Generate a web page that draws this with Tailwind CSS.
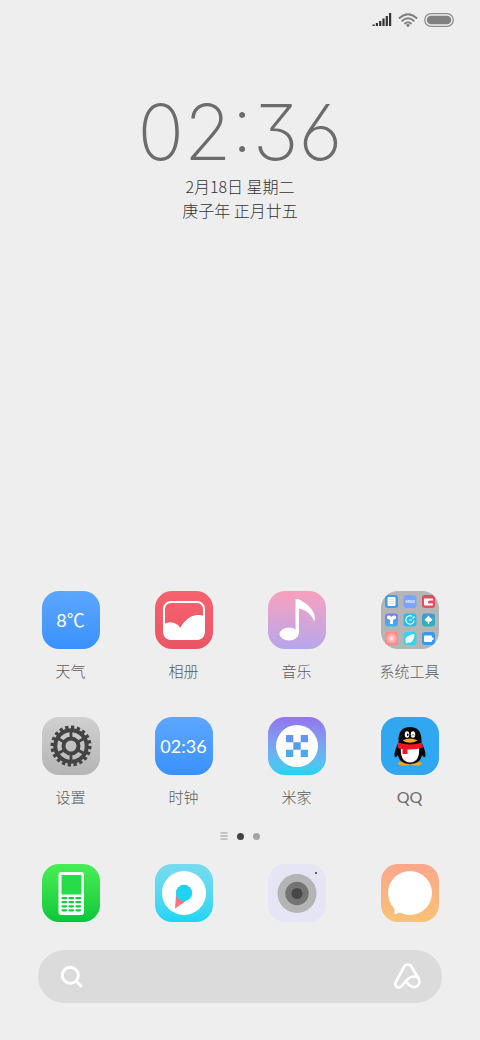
<!DOCTYPE html>
<html lang="zh-CN">
<head>
<meta charset="utf-8">
<meta name="viewport" content="width=device-width, initial-scale=1">
<title>主屏幕</title>
<script src="https://cdn.jsdelivr.net/npm/@tailwindcss/browser@4"></script>
</head>
<body class="flex min-h-screen flex-col bg-[#eeeeee] font-['Noto_Sans_CJK_SC',sans-serif] font-light text-[#5c5c5c]">
<header class="flex h-10 items-center justify-end gap-[6px] pr-[26px]">
  <svg class="h-[14px] w-[20px]" viewBox="0 0 20 14" fill="#333" role="img" aria-label="信号"><path d="M.5 11.500h2.200V13H.5zM3.800 10H6v3H3.800zM7.100 8h2.200v5H7.100zM10.400 5.500h2.200V13h-2.200zM13.700 3h2.200v10h-2.200zM17 0h2.200v13H17z"/></svg>
  <svg class="h-[14px] w-[20px]" viewBox="0 0 20 14" fill="none" stroke="#808080" stroke-width="1.900" stroke-linecap="round" role="img" aria-label="无线网络"><path d="M1.500 5Q10-2.600 18.500 5M4.300 7.800Q10 2.700 15.700 7.800M7 10.400Q10 7.900 13 10.400"/><circle cx="10" cy="12.300" r=".7" fill="#808080"/></svg>
  <svg class="h-[14px] w-[30px]" viewBox="0 0 30 14" role="img" aria-label="电池"><rect x=".7" y=".7" width="28.600" height="12.600" rx="6.300" fill="none" stroke="#8a8a8a" stroke-width="1.200"/><rect x="2.800" y="2.800" width="24.400" height="8.400" rx="4.200" fill="#808080"/></svg>
</header>

<section class="mt-12 flex flex-col items-center">
  <time class="font-['Inter',sans-serif] text-[77px] leading-[88px] font-extralight text-[#6c6c6c] [font-feature-settings:'cv09','cv03']">02:36</time>
  <p class="text-base leading-5 text-[#333]">2月18日 星期二</p>
  <p class="mt-1 text-base leading-5 text-[#333]">庚子年 正月廿五</p>
</section>

<main class="mt-auto pb-[37px]">
  <nav aria-label="应用" class="grid grid-cols-4 gap-y-[35px] px-[14px]">
    <a href="#weather" class="flex flex-col items-center gap-[10px]">
      <span class="grid size-[58px] place-items-center rounded-[17px] bg-linear-to-b from-[#5da6ff] to-[#3991ff] font-['Lato','Noto_Sans_CJK_SC',sans-serif] text-lg leading-none font-normal text-white">8℃</span>
      <span class="text-[15px] leading-[23px]">天气</span>
    </a>
    <a href="#gallery" class="flex flex-col items-center gap-[10px]">
      <svg class="size-[58px] rounded-[17px] bg-linear-to-b from-[#f8626e] to-[#e85665]" viewBox="0 0 58 58"><rect x="9" y="11" width="40" height="37" rx="7" fill="none" stroke="#fff" stroke-width="2"/><path d="M9 33q5-3 10-1 5 2 6 5 6-11 16-13 4-.5 8 1v17q0 6-6 6H15q-6 0-6-6z" fill="#fff"/></svg>
      <span class="text-[15px] leading-[23px]">相册</span>
    </a>
    <a href="#music" class="flex flex-col items-center gap-[10px]">
      <svg class="size-[58px] rounded-[17px] bg-linear-to-b from-[#f8a0bd] to-[#b5a6ec]" viewBox="0 0 58 58" fill="#fff"><ellipse cx="21" cy="43" rx="9.500" ry="6.500"/><path d="M27.500 8h3c3 2 8 4 12 9 4 5 5 9 4 13.500C43 23 38 19 31 17.500V43h-3.500z"/></svg>
      <span class="text-[15px] leading-[23px]">音乐</span>
    </a>
    <a href="#tools" class="flex flex-col items-center gap-[10px]">
      <svg class="size-[58px] rounded-[17px] bg-[#b5b5b5]" viewBox="0 0 58 58">
        <defs>
          <linearGradient id="g1" x2="0" y2="1"><stop stop-color="#8177e8"/><stop offset="1" stop-color="#2dbcf5"/></linearGradient>
          <linearGradient id="g2" x2="0" y2="1"><stop stop-color="#3f98d8"/><stop offset="1" stop-color="#28b7b0"/></linearGradient>
          <radialGradient id="g3"><stop stop-color="#ffe7e5"/><stop offset=".4" stop-color="#ffb9b7"/><stop offset="1" stop-color="#ff8585"/></radialGradient>
        </defs>
        <rect x="4" y="4" width="13" height="13" rx="3" fill="#4399f2"/><rect x="6.500" y="6" width="8" height="9" rx="1" fill="#fff"/><path d="M8 8.500h5M8 10.500h5M8 12.500h5" stroke="#c5d8e8" stroke-width=".6"/>
        <rect x="22.500" y="4" width="13" height="13" rx="3" fill="#7ba5fa"/><text x="29" y="12" text-anchor="middle" font-family="Lato" font-size="4" font-weight="900" fill="#eef4ff">MIUI</text>
        <rect x="41" y="4" width="13" height="13" rx="3" fill="#e64b60"/><path d="M43 7.500h8q1 0 1 1v1h-3.500q-1.500 0-1.500 1.500t1.500 1.500H52v1q0 1-1 1h-7q-1 0-1-1z" fill="#fff"/>
        <rect x="4" y="22.500" width="13" height="13" rx="3" fill="url(#g1)"/><path d="M6 25.500q2-2 4.500.5 2.500-2.500 4.500-.5v2l-3 1.500v4H9v-4l-3-1.500z" fill="#fff"/>
        <rect x="22.500" y="22.500" width="13" height="13" rx="3" fill="#25bdeb"/><path d="M31 25.200a4.200 4.200 0 1 0 2.200 4.300M28 29h3M31.500 27.500l2-2" stroke="#fff" stroke-width="1.200" fill="none"/>
        <rect x="41" y="22.500" width="13" height="13" rx="3" fill="url(#g2)"/><path d="m47.500 24.500 1.500 2 2.500 2-2 2.200h-1.300V33h-1.400v-2.300h-1.300l-2-2.200 2.500-2z" fill="#fff"/>
        <rect x="4" y="41" width="13" height="13" rx="3" fill="url(#g3)"/>
        <rect x="22.500" y="41" width="13" height="13" rx="3" fill="#31d5ee"/><path d="M24.500 50c-1-4 4-6.500 9-7 0 5-2.500 9.500-6.500 8.500l-2 1z" fill="#fff"/>
        <rect x="41" y="41" width="13" height="13" rx="3" fill="#3b99ea"/><path d="M44 44.500h6q1 0 1 1v.8l1.500.7v1.500l-1.500.7v.8q0 1-1 1h-6q-1 0-1-1v-4.500q0-1 1-1z" fill="#fff"/>
      </svg>
      <span class="text-[15px] leading-[23px]">系统工具</span>
    </a>
    <a href="#settings" class="flex flex-col items-center gap-[10px]">
      <svg class="size-[58px] rounded-[17px] bg-linear-to-b from-[#d0d0d0] to-[#b5b5b5]" viewBox="0 0 58 58" fill="none" stroke="#434343"><circle cx="29" cy="29" r="18.700" stroke-width="3.600" stroke-dasharray="3.300 2.575" pathLength="117.500"/><circle cx="29" cy="29" r="15.700" stroke-width="4"/><circle cx="29" cy="29" r="7.500" stroke-width="4"/><path d="M29 14v8M29 36v8M16 21.500l7 4M35 32.500l7 4M16 36.500l7-4M35 25.500l7-4" stroke-width="2.800"/></svg>
      <span class="text-[15px] leading-[23px]">设置</span>
    </a>
    <a href="#clock" class="flex flex-col items-center gap-[10px]">
      <span class="grid size-[58px] place-items-center rounded-[17px] bg-linear-to-b from-[#5da6ff] to-[#3991ff] font-['Lato',sans-serif] text-lg leading-none font-normal text-white">02:36</span>
      <span class="text-[15px] leading-[23px]">时钟</span>
    </a>
    <a href="#mihome" class="flex flex-col items-center gap-[10px]">
      <svg class="size-[58px] rounded-[17px] bg-linear-to-b from-[#9474ee] to-[#1bd3f3]" viewBox="0 0 58 58"><circle cx="29" cy="29" r="21" fill="#fff"/><path d="M18 18h7.300v7.300H18zM32.700 18H40v7.300h-7.300z" fill="#6396ee"/><path d="M25.300 25.300h7.400v7.400h-7.400z" fill="#559eee"/><path d="M18 32.700h7.300V40H18zM32.700 32.700H40V40h-7.300z" fill="#4aa9ef"/></svg>
      <span class="text-[15px] leading-[23px]">米家</span>
    </a>
    <a href="#qq" class="flex flex-col items-center gap-[10px]">
      <svg class="size-[58px] rounded-[17px] bg-[#30a7f0]" viewBox="0 0 58 58"><ellipse cx="23" cy="46.500" rx="6" ry="2" fill="#f5a81c"/><ellipse cx="35" cy="46.500" rx="6" ry="2" fill="#f5a81c"/><path d="M17.500 25C17 15 21 10 29 10s12 5 11.500 15c1 3 4 8 4 13 0 3-1.500 3-3.500 0-1 6-5.500 9-12 9s-11-3-12-9c-2 3-3.500 3-3.500 0 0-5 3-10 4-13z" fill="#080808"/><path d="M20 30h18c1 9-2 15.500-9 15.500S19 39 20 30z" fill="#fff"/><path d="M17 25.500q12 4 24 0l1 5q-7 2.500-15.500 2V37h-5v-5q-3 0-5-1.500z" fill="#ef1723"/><ellipse cx="26" cy="17.500" rx="2.200" ry="3.200" fill="#fff"/><ellipse cx="32" cy="17.500" rx="2.200" ry="3.200" fill="#fff"/><ellipse cx="26.700" cy="17.800" rx=".8" ry="1.300"/><path d="M31 18.500q1-2 2 0" fill="none" stroke="#000" stroke-width=".8"/><path d="M21.500 23.500q7.500-4 15 0-7.500 4.500-15 0z" fill="#f5a81c"/></svg>
      <span class="font-['Lato',sans-serif] text-base leading-[23px] font-normal text-[#6c6c6c]">QQ</span>
    </a>
  </nav>

  <div class="mt-[22px] flex h-3 items-center justify-center gap-[9px]">
    <button aria-label="负一屏"><svg class="block size-[8px]" viewBox="0 0 8 8" stroke="#999" stroke-width="1.200"><path d="M.5 1h7M.5 4h7M.5 7h7"/></svg></button>
    <button aria-label="第一页" class="size-[7px] rounded-full bg-[#444]"></button>
    <button aria-label="第二页" class="size-[7px] rounded-full bg-[#a5a5a5]"></button>
  </div>

  <nav aria-label="快捷栏" class="mt-[22px] grid grid-cols-4 justify-items-center px-[14px]">
    <a href="#phone" aria-label="电话"><svg class="size-[58px] rounded-[17px] bg-linear-to-b from-[#46ef54] to-[#04c739]" viewBox="0 0 58 58"><rect x="16.500" y="8" width="25.500" height="43" rx="3" fill="#fff"/><path d="M19.500 11h20v19.500h-20z" fill="#27dc49"/><path d="M20.500 34.200h3.500M27.500 34.200H31M34.500 34.200H38M20.500 38.200h3.500M27.500 38.200H31M34.500 38.200H38M20.500 42.300h3.500M27.500 42.300H31M34.500 42.300H38M20.500 46.300h3.500M27.500 46.300H31M34.500 46.300H38" stroke="#10cd3e" stroke-width="2.200" stroke-linecap="round"/></svg></a>
    <a href="#browser" aria-label="浏览器"><svg class="size-[58px] rounded-[17px] bg-linear-to-b from-[#77dcef] to-[#19d5f4]" viewBox="0 0 58 58"><circle cx="29" cy="29" r="22" fill="#fff"/><path d="m21 31-1 13.500L31 37z" fill="#f87580"/><circle cx="29" cy="29" r="8.200" fill="#20d3f2"/></svg></a>
    <a href="#camera" aria-label="相机"><svg class="size-[58px] rounded-[17px] bg-[#e6e5f6]" viewBox="0 0 58 58"><circle cx="29" cy="29.500" r="19.500" fill="#b4b4b4"/><circle cx="29" cy="29.500" r="11.700" fill="#747474"/><circle cx="29" cy="29.500" r="5.500" fill="#474747"/><circle cx="48" cy="9" r="1" fill="#333"/></svg></a>
    <a href="#messages" aria-label="短信"><svg class="size-[58px] rounded-[17px] bg-linear-to-b from-[#fba68b] to-[#f7c276]" viewBox="0 0 58 58" fill="#fff"><circle cx="29" cy="29" r="22"/><path d="M13.500 42v8.500l7-2.500z"/></svg></a>
  </nav>

  <form role="search" class="mx-[38px] mt-7 flex h-[53px] items-center rounded-full bg-[#dbdbdb] pr-[19px] pl-[22px]">
    <button type="submit" aria-label="搜索"><svg class="block size-6" viewBox="0 0 24 24" fill="none" stroke="#fff" stroke-width="3" stroke-linecap="round"><circle cx="10.300" cy="10.300" r="8"/><path d="m16.500 16.500 4.500 4.500"/></svg></button>
    <input type="search" aria-label="搜索内容" class="min-w-0 flex-1 bg-transparent px-3 text-base outline-none">
    <button type="button" aria-label="小爱同学"><svg class="block size-[30px]" viewBox="0 0 30 30" fill="none" stroke="#fff" stroke-width="2.700" stroke-linecap="round" stroke-linejoin="round"><path d="M26 17 18.500 4.800C16.800 2 12.800 2 11 4.800L2.800 20C1 24 5 27.300 8.300 24.500L12.500 19.500C15 16.500 17.500 14.500 21 14.500c3.500 0 5.500 2.500 5.500 5.300s-2.500 5.400-5.500 5.400c-4 0-5.500-3.500-8.500-5.700"/></svg></button>
  </form>
</main>
</body>
</html>
